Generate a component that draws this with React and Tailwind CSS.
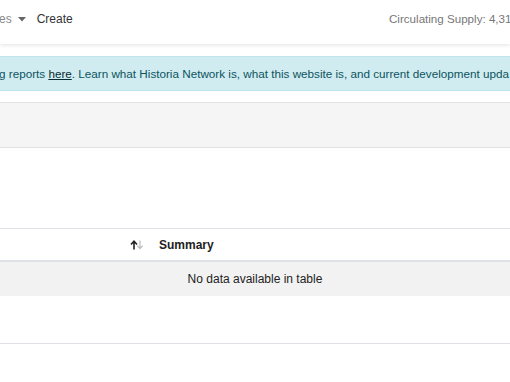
export default function App() {
  return (
    <div className="w-[510px] h-[382px] overflow-hidden bg-white relative" style={{ fontFamily: '"Liberation Sans", Arial, sans-serif' }}>
      {/* navbar */}
      <div className="h-[44px] flex items-center justify-between bg-white shadow-[0_2px_3px_rgba(0,0,0,0.08)] relative z-10 text-[12px] pb-[6px]">
        <div className="flex items-center">
          <span className="text-[#8a8a8a] -ml-[1px]">es</span>
          <svg width="8" height="5" viewBox="0 0 8 5" className="ml-[6px] mt-[1px]"><path d="M0 0h8L4 4.5z" fill="#666" /></svg>
          <span className="ml-[11px] text-[#333]">Create</span>
        </div>
        <div className="text-[#777] text-[11.6px] whitespace-nowrap w-[121px] shrink-0">Circulating Supply: 4,31</div>
      </div>
      {/* alert */}
      <div className="mt-[12px] h-[35px] bg-[#d1ecf1] border-y border-[#bee5eb] flex items-center whitespace-nowrap overflow-hidden text-[11.7px] text-[#0c5460]">
        <span className="-ml-[1px]">g reports <a className="underline text-[#062c33]">here</a>. Learn what Historia Network is, what this website is, and current development upda</span>
      </div>
      {/* gray band */}
      <div className="mt-[11px] h-[46px] bg-[#f5f5f5] border-y border-[#e2e2e2]"></div>
      {/* table */}
      <div className="mt-[80px] border-t border-[#dee2e6]">
        <div className="h-[33px] flex items-center border-b-2 border-[#dee2e6] text-[12px]">
          <div className="w-[147px] flex justify-end pr-[3px]">
            <svg width="14" height="10" viewBox="0 0 14 10">
              <path d="M4 9.5V1.5M1 4.5L4 1.2L7 4.5" stroke="#222" strokeWidth="1.6" fill="none" />
              <path d="M10 0.5V8.5M7.3 5.7L10 8.7L12.7 5.7" stroke="#bbb" strokeWidth="1.2" fill="none" />
            </svg>
          </div>
          <div className="pl-[12px] font-bold text-[#222]">Summary</div>
        </div>
        <div className="h-[34px] bg-[#f2f2f2] flex items-center justify-center text-[12px] text-[#222]">
          No data available in table
        </div>
        <div className="h-[48px] border-b border-[#dee2e6]"></div>
      </div>
    </div>
  );
}
